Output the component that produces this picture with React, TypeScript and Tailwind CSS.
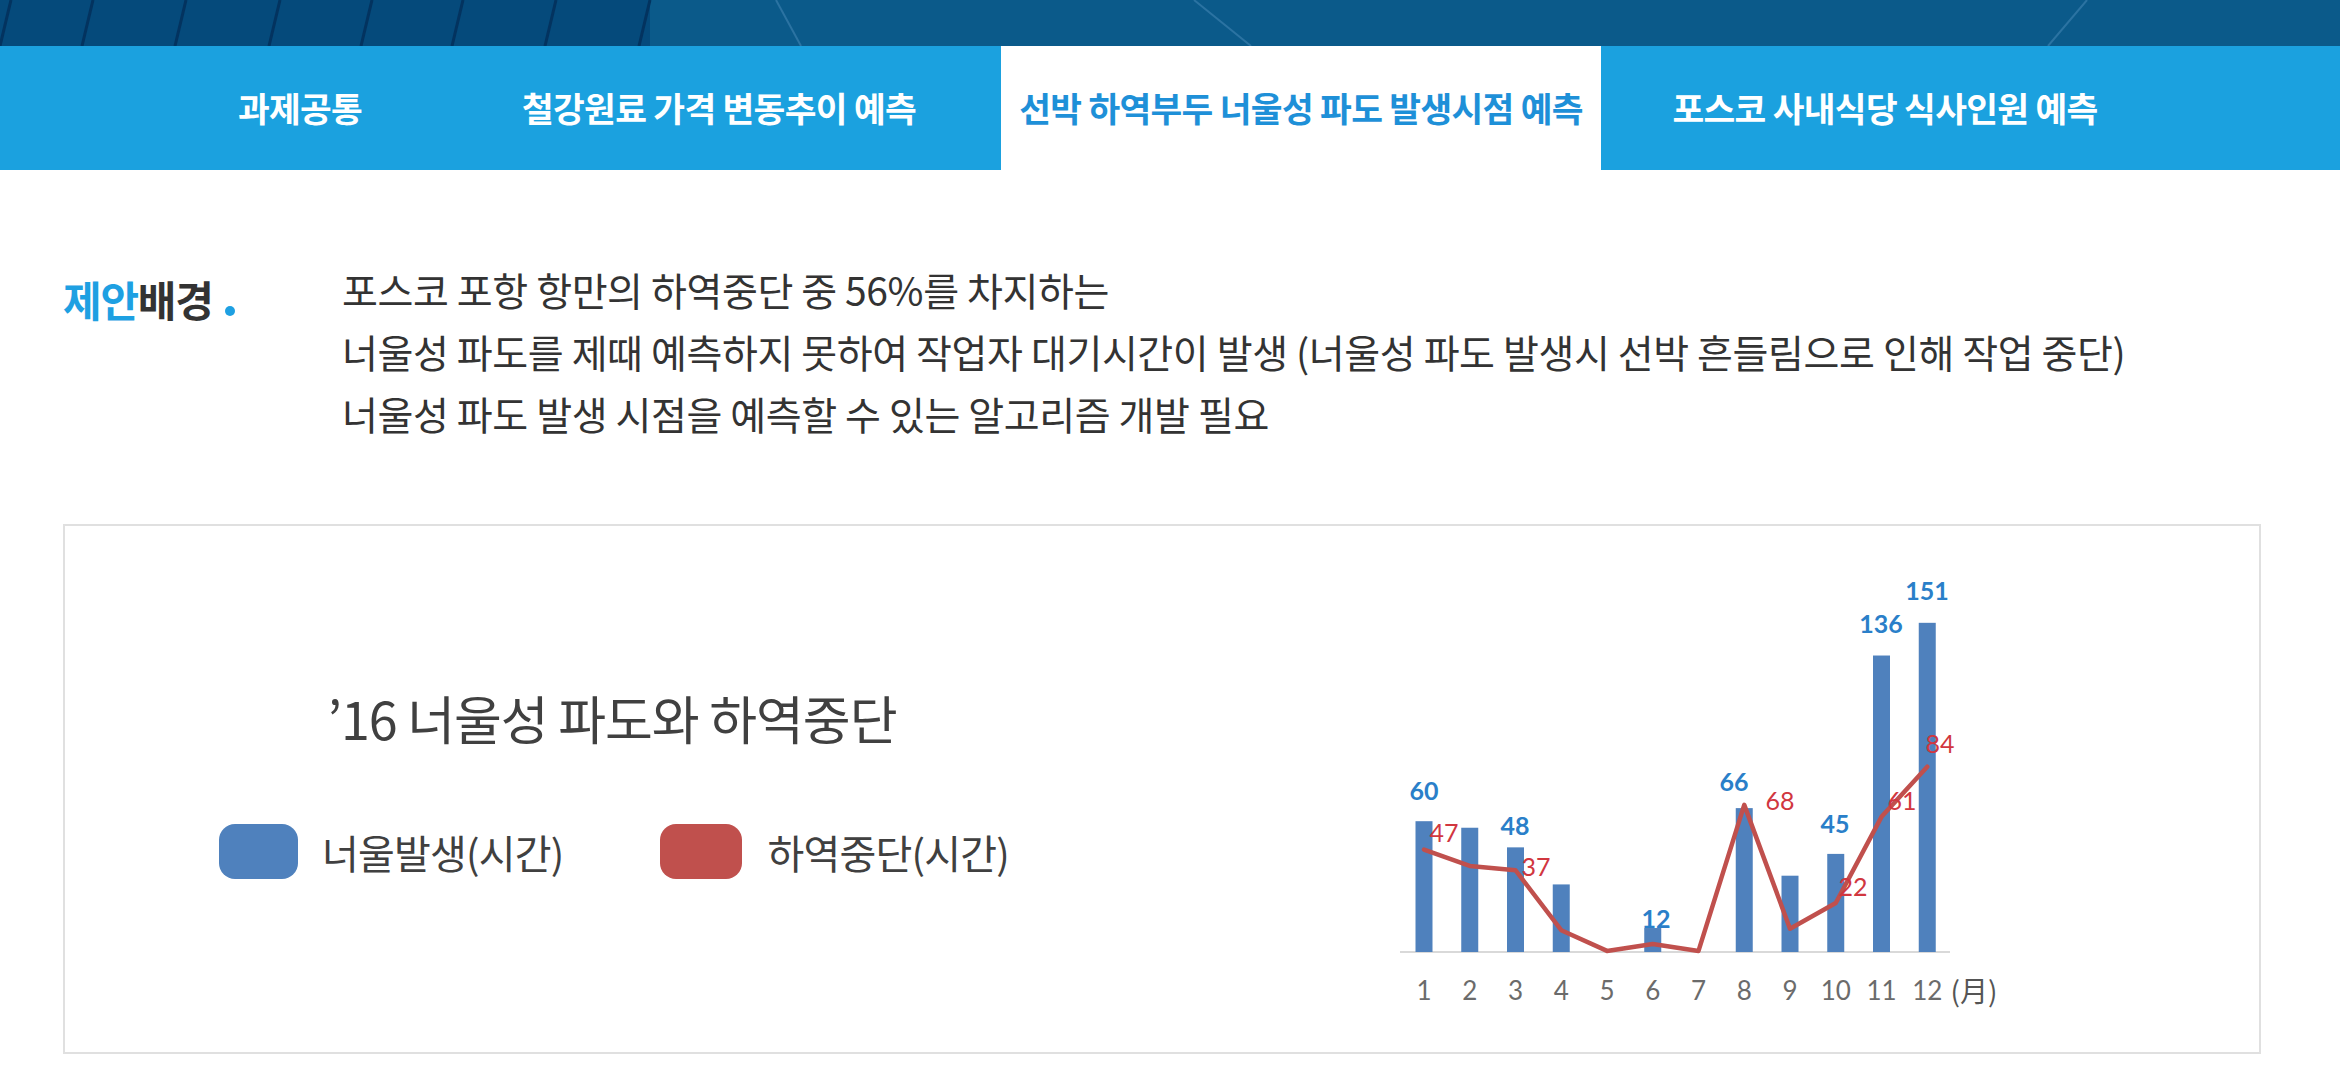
import React from "react";

const FONT = { fontFamily: '"Noto Sans CJK KR", "Noto Sans", sans-serif' };

const tabs = [
  { label: "과제공통", width: "w-[274px]", active: false },
  { label: "철강원료 가격 변동추이 예측", width: "w-[564px]", active: false },
  { label: "선박 하역부두 너울성 파도 발생시점 예측", width: "w-[600px]", active: true },
  { label: "포스코 사내식당 식사인원 예측", width: "w-[568px]", active: false },
];

const bars = [60, 57, 48, 31, 0, 11, 0, 66, 35, 45, 136, 151];
const stops = [47, 39.5, 37.5, 10, 0.5, 3.7, 0.5, 67.5, 10.7, 22.5, 62, 85];

const blueLabels = [
  { t: "60", x: 1425, y: 792 },
  { t: "48", x: 1516, y: 827 },
  { t: "12", x: 1657, y: 920 },
  { t: "66", x: 1735, y: 783 },
  { t: "45", x: 1836, y: 825 },
  { t: "136", x: 1882, y: 625 },
  { t: "151", x: 1928, y: 592 },
];

const redLabels = [
  { t: "47", x: 1445, y: 834 },
  { t: "37", x: 1537, y: 868 },
  { t: "68", x: 1781, y: 802 },
  { t: "22", x: 1854, y: 888 },
  { t: "61", x: 1903, y: 802 },
  { t: "84", x: 1941, y: 745 },
];

const AXIS = 954;
const UNIT = 2.18;
const cx = (i: number) => 1425 + i * 45.75;

function Banner() {
  const dark = [0, 82, 175, 269, 361, 452, 545, 639];
  return (
    <div className="h-[46px] w-full bg-[#0b5a8a]">
      <svg width="2340" height="46" viewBox="0 0 2340 46" className="block">
        <rect x="0" y="0" width="650" height="46" fill="#054a7b" />
        {dark.map((x) => (
          <line key={x} x1={x + 11} y1="0" x2={x} y2="46" stroke="#03335f" strokeWidth="3" />
        ))}
        <line x1="776" y1="0" x2="801" y2="46" stroke="#2b73a2" strokeWidth="2" />
        <line x1="1194" y1="0" x2="1251" y2="46" stroke="#2b73a2" strokeWidth="2" />
        <line x1="2087" y1="0" x2="2048" y2="46" stroke="#2b73a2" strokeWidth="2" />
      </svg>
    </div>
  );
}

function Nav() {
  return (
    <nav className="flex h-[124px] bg-[#1ba1df] pl-[163px]">
      {tabs.map((tab) => (
        <div
          key={tab.label}
          className={
            tab.width +
            " flex items-center justify-center whitespace-nowrap text-[34.5px] font-bold tracking-[-0.02em] " +
            (tab.active ? "bg-white text-[#1e90d8]" : "text-white")
          }
        >
          {tab.label}
        </div>
      ))}
    </nav>
  );
}

function Background() {
  return (
    <section className="flex pt-[88px] pl-[63px]">
      <h2 className="flex w-[279px] shrink-0 items-end self-start pt-[10px] text-[42px] leading-[62px] font-bold tracking-[-0.03em]">
        <span className="text-[#1ea0e2]">제안</span>
        <span className="text-[#333333]">배경</span>
        <span className="mb-[14px] ml-[12px] inline-block h-[10px] w-[10px] rounded-full bg-[#1ea0e2]" />
      </h2>
      <div className="whitespace-nowrap text-[39px] leading-[62px] text-[#333333] tracking-[-0.01em]">
        <p>포스코 포항 항만의 하역중단 중 56%를 차지하는</p>
        <p>너울성 파도를 제때 예측하지 못하여 작업자 대기시간이 발생 (너울성 파도 발생시 선박 흔들림으로 인해 작업 중단)</p>
        <p>너울성 파도 발생 시점을 예측할 수 있는 알고리즘 개발 필요</p>
      </div>
    </section>
  );
}

function Chart() {
  const pts = stops.map((v, i) => `${cx(i)},${AXIS - v * UNIT}`).join(" ");
  return (
    <svg width="640" height="470" viewBox="1370 560 640 470" className="block">
      <line x1="1401" y1={AXIS} x2="1951" y2={AXIS} stroke="#d9d9d9" strokeWidth="2" />
      {bars.map((v, i) =>
        v > 0 ? (
          <rect key={i} x={cx(i) - 8.5} y={AXIS - v * UNIT} width="17" height={v * UNIT} fill="#4f81bd" />
        ) : null
      )}
      <polyline points={pts} fill="none" stroke="#c0504d" strokeWidth="4.5" strokeLinejoin="round" strokeLinecap="round" />
      {blueLabels.map((l) => (
        <text
          key={l.t}
          x={l.x}
          y={l.y}
          textAnchor="middle"
          dominantBaseline="central"
          fontFamily="Lato, 'Noto Sans', sans-serif"
          fontWeight="700"
          fontSize="25"
          fill="#2a7fc9"
        >
          {l.t}
        </text>
      ))}
      {redLabels.map((l) => (
        <text
          key={l.t}
          x={l.x}
          y={l.y}
          textAnchor="middle"
          dominantBaseline="central"
          fontFamily="Lato, 'Noto Sans', sans-serif"
          fontSize="25"
          fill="#d1373f"
        >
          {l.t}
        </text>
      ))}
      {bars.map((_, i) => (
        <text
          key={i}
          x={cx(i)}
          y="992"
          textAnchor="middle"
          dominantBaseline="central"
          fontFamily="Lato, 'Noto Sans', sans-serif"
          fontSize="26"
          fill="#6b6b6b"
        >
          {i + 1}
        </text>
      ))}
      <text
        x="1975"
        y="992"
        textAnchor="middle"
        dominantBaseline="central"
        fontFamily="'Noto Sans CJK KR', 'Noto Sans CJK JP', sans-serif"
        fontSize="28"
        fill="#555555"
      >
        (月)
      </text>
    </svg>
  );
}

function ChartCard() {
  return (
    <div className="mt-[80px] ml-[63px] flex h-[530px] w-[2198px] border-2 border-[#e0e0e0] bg-white">
      <div className="ml-[154px] flex w-[786px] shrink-0 flex-col items-center pt-[162px]">
        <h3 className="whitespace-nowrap text-[52px] leading-[60px] text-[#404040] tracking-[-0.02em]">’16 너울성 파도와 하역중단</h3>
        <div className="mt-[76px] flex w-full items-center">
          <span className="h-[55px] w-[79px] shrink-0 rounded-[16px] bg-[#4f81bd]" />
          <span className="ml-[24px] whitespace-nowrap text-[40px] leading-[48px] text-[#404040] tracking-[-0.02em]">너울발생(시간)</span>
          <span className="ml-[97px] h-[55px] w-[82px] shrink-0 rounded-[16px] bg-[#c0504d]" />
          <span className="ml-[25px] whitespace-nowrap text-[40px] leading-[48px] text-[#404040] tracking-[-0.02em]">하역중단(시간)</span>
        </div>
      </div>
      <div className="ml-[364px] shrink-0 pt-[32px]">
        <Chart />
      </div>
    </div>
  );
}

export default function App() {
  return (
    <div className="min-h-[1086px] w-[2340px] bg-white" style={FONT}>
      <Banner />
      <Nav />
      <Background />
      <ChartCard />
    </div>
  );
}
